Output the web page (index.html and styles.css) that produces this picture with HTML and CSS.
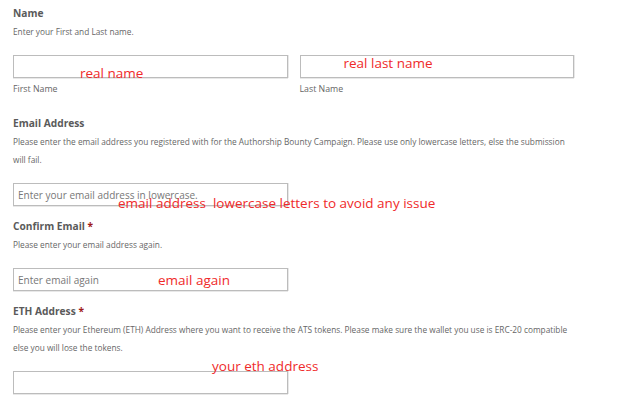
FILE: index.html
```html
<!DOCTYPE html>
<html lang="en">
<head>
    <meta charset="UTF-8">
    <meta name="viewport" content="width=device-width, initial-scale=1.0">
    <title>Authorship Bounty Campaign</title>
    <link rel="stylesheet" href="styles.css">
</head>
<body>

    <form class="bounty-form">
        <div class="field name-field">
            <div class="field-title">Name</div>
            <div class="field-desc">Enter your First and Last name.</div>
            <div class="name-row">
                <div class="name-part">
                    <input type="text" class="text-input">
                    <div class="sub-label">First Name</div>
                    <span class="note note-first">real name</span>
                </div>
                <div class="name-part">
                    <input type="text" class="text-input">
                    <div class="sub-label">Last Name</div>
                    <span class="note note-last">real last name</span>
                </div>
            </div>
        </div>

        <div class="field">
            <div class="field-title">Email Address</div>
            <div class="field-desc">Please enter the email address you registered with for the Authorship Bounty Campaign. Please use only lowercase letters, else the submission will fail.</div>
            <div class="input-wrap">
                <input type="email" class="text-input short" placeholder="Enter your email address in lowercase.">
                <span class="note note-email">email address&nbsp; lowercase letters to avoid any issue</span>
            </div>
        </div>

        <div class="field">
            <div class="field-title">Confirm Email <span class="req">*</span></div>
            <div class="field-desc">Please enter your email address again.</div>
            <div class="input-wrap">
                <input type="email" class="text-input short" placeholder="Enter email again">
                <span class="note note-again">email again</span>
            </div>
        </div>

        <div class="field">
            <div class="field-title">ETH Address <span class="req">*</span></div>
            <div class="field-desc">Please enter your Ethereum (ETH) Address where you want to receive the ATS tokens. Please make sure the wallet you use is ERC-20 compatible else you will lose the tokens.</div>
            <div class="input-wrap">
                <input type="text" class="text-input short">
                <span class="note note-eth">your eth address</span>
            </div>
        </div>
    </form>

</body>
</html>
```

FILE: styles.css
```css
body {
    margin: 0;
    padding: 0;
    background: #ffffff;
    font-family: 'Open Sans', sans-serif;
    color: #555;
}

.bounty-form {
    padding: 5px 13px 0 13px;
    width: 561px;
}

.field {
    margin-bottom: 12px;
}

.name-field {
    margin-bottom: 20px;
}

.field-title {
    font-size: 10.2px;
    font-weight: bold;
    color: #5a5a5a;
    line-height: 16px;
    margin-bottom: 2px;
}

.req {
    color: #a01818;
}

.field-desc {
    font-size: 8.3px;
    color: #666;
    line-height: 18px;
    margin-bottom: 14px;
}

.name-row {
    display: flex;
    gap: 12px;
}

.name-part {
    position: relative;
    flex: 1;
}

.sub-label {
    font-size: 8.8px;
    color: #666;
    line-height: 12px;
    margin-top: 5px;
}

.input-wrap {
    position: relative;
}

.text-input {
    display: block;
    width: 100%;
    height: 23px;
    box-sizing: border-box;
    border: 1px solid #bcbcbc;
    box-shadow: 0 1px 0 #e8e8e8, 1px 0 0 #e8e8e8;
    padding: 0 4px;
    font-family: 'Open Sans', sans-serif;
    font-size: 10px;
    color: #555;
    background: #fff;
}

.text-input.short {
    width: 275px;
}

.text-input::placeholder {
    color: #777;
}

/* красные пометки поверх полей */
.note {
    position: absolute;
    font-family: 'Open Sans', sans-serif;
    font-size: 13.5px;
    color: #ef2a2a;
    white-space: nowrap;
    line-height: 14px;
}

.note-first {
    left: 67px;
    top: 11px;
}

.note-last {
    left: 44px;
    top: 1px;
}

.note-email {
    left: 105px;
    top: 13px;
}

.note-again {
    left: 145px;
    top: 5px;
}

.note-eth {
    left: 199px;
    top: -12px;
}
```
